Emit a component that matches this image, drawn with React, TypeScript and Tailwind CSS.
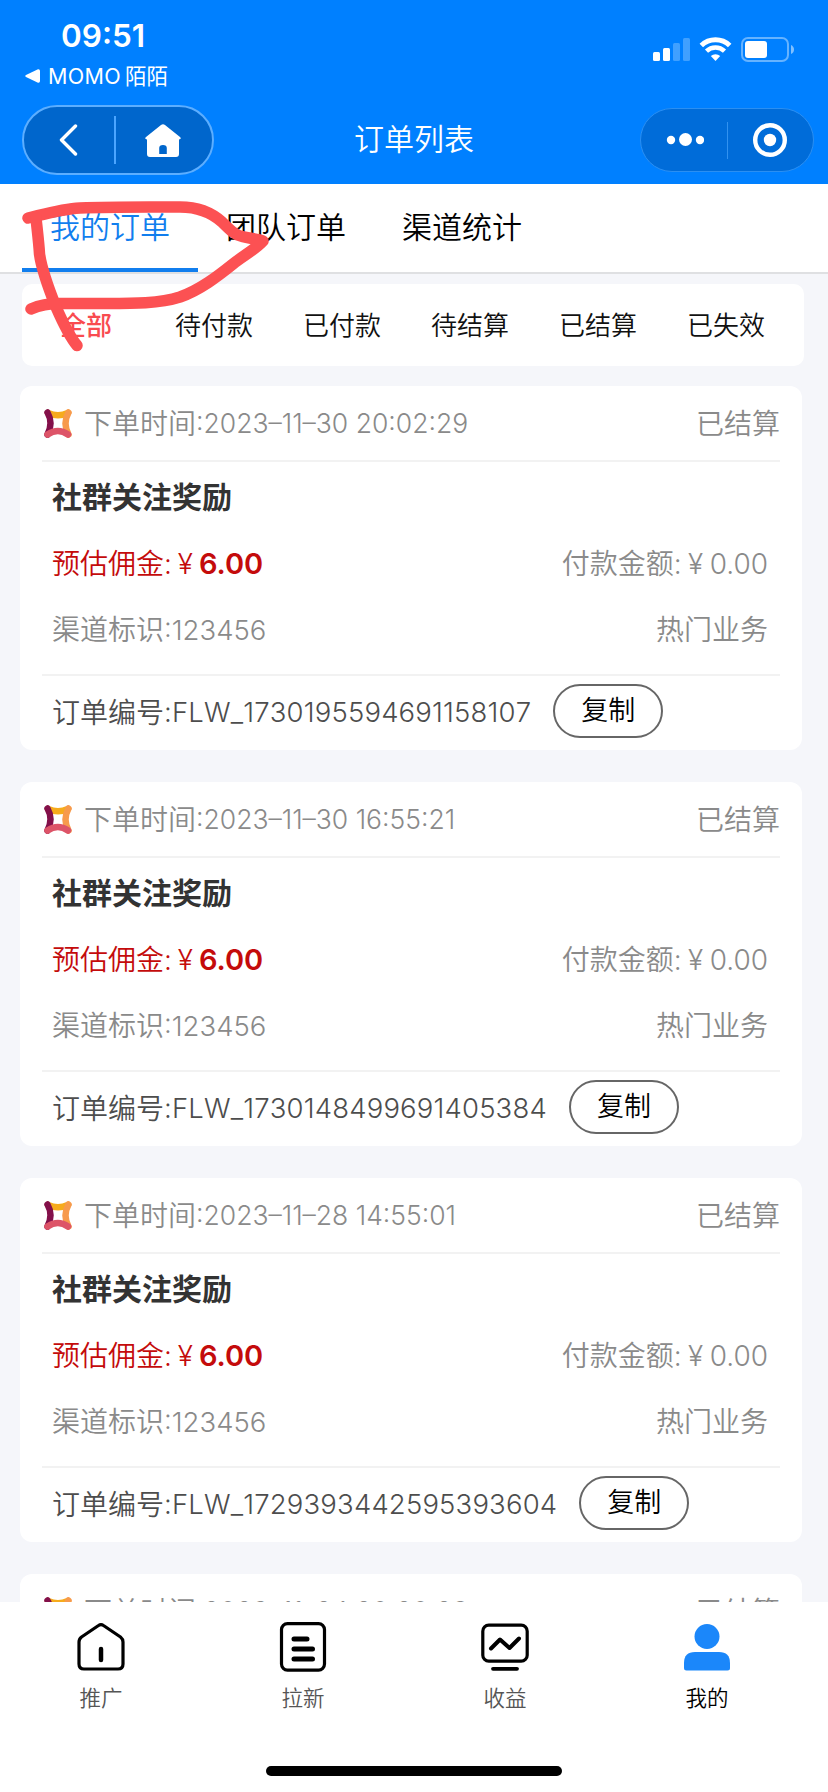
import React from 'react';

interface Order {
    id: string;
    time: string;
    status: string;
}

const tabs = ['我的订单', '团队订单', '渠道统计'];
const filters = ['全部', '待付款', '已付款', '待结算', '已结算', '已失效'];

const orders: Order[] = [
    { id: 'FLW_1730195594691158107', time: '2023–11–30 20:02:29', status: '已结算' },
    { id: 'FLW_1730148499691405384', time: '2023–11–30 16:55:21', status: '已结算' },
    { id: 'FLW_1729393442595393604', time: '2023–11–28 14:55:01', status: '已结算' },
    { id: 'FLW_1727940293640282302', time: '2023–11–24 20:20:28', status: '已结算' },
];

const StatusBar: React.FC = () => (
    <div className="flex h-[93px] justify-between pl-[25px] pr-[33px] text-white">
        <div>
            <div className="mt-[16px] pl-[36px] text-[31.5px] leading-[40px] font-semibold">09:51</div>
            <div className="mt-[5px] flex items-center gap-[8px] text-[21.5px] leading-[30px]">
                <svg width="15" height="14" viewBox="0 0 15 14" fill="currentColor">
                    <path d="M1 6 13 .3Q15 0 15 2v10q0 2-2 1.700L1 8Q-.5 7 1 6Z" />
                </svg>
                <span className="flex">
                    <span className="tracking-[0.3px]">MOMO</span>
                    <span className="ml-[4px]">陌陌</span>
                </span>
            </div>
        </div>
        <div className="mt-[37px] flex h-[25px]">
            <svg width="37" height="25" viewBox="0 0 37 25" fill="currentColor">
                <rect y="15" width="7" height="9" rx="1.500" />
                <rect x="10" y="11" width="7" height="13" rx="1.500" />
                <rect x="20" y="6" width="7" height="18" rx="1.500" opacity=".25" />
                <rect x="30" y="1" width="7" height="23" rx="1.500" opacity=".25" />
            </svg>
            <svg className="ml-[9px]" width="33" height="25" viewBox="0 0 33 25" fill="none" stroke="currentColor">
                <path d="M2.300 8.500a20.500 20.500 0 0 1 28.400 0" strokeWidth="5" />
                <path d="M7.500 14.200a13 13 0 0 1 18 0" strokeWidth="4.500" />
                <path d="M11.800 19a7 7 0 0 1 9.400 0L16.500 24Z" fill="currentColor" stroke="none" />
            </svg>
            <svg className="ml-[9px]" width="54" height="25" viewBox="0 0 54 25">
                <rect x="1" y="1" width="46" height="23" rx="6" fill="none" stroke="#fff" strokeWidth="2" opacity=".4" />
                <rect x="4" y="4" width="22" height="17" rx="3" fill="#fff" />
                <path d="M50 8q3 1.500 3 4.500T50 17Z" fill="#fff" opacity=".5" />
            </svg>
        </div>
    </div>
);

const NavBar: React.FC = () => (
    <div className="flex h-[91px] items-start pl-[22px] pr-[14px] text-white">
        <div className="mt-[12px] flex h-[70px] w-[192px] items-center rounded-full border-2 border-[#5caeff] bg-[#0066cc]">
            <svg className="ml-[35px]" width="20" height="32" viewBox="0 0 20 32" fill="none" stroke="currentColor" strokeWidth="3.400" strokeLinecap="round" strokeLinejoin="round">
                <path d="M16.500 2 2.500 16l14 14" />
            </svg>
            <div className="ml-[35px] h-[48px] w-[2px] bg-[#4ba5ff]" />
            <svg className="ml-[29px]" width="36" height="33" viewBox="0 0 36 33" fill="currentColor">
                <path d="M16 1q2-1.500 4 0l15 12q2 2-1 2.500V30q0 3-3 3H5q-3 0-3-3V15.500Q-1 15 1 13ZM14.200 30h7.600v-6q0-3-3.800-3t-3.800 3Z" fillRule="evenodd" />
            </svg>
        </div>
        <h1 className="mt-[25px] ml-[140px] text-[30px] leading-[42px] font-[350]">订单列表</h1>
        <div className="mt-[15px] ml-auto flex h-[64px] w-[174px] items-center rounded-full border border-[#2b8ff2] bg-[#006cd9]">
            <svg className="ml-[25px]" width="38" height="14" viewBox="0 0 38 14" fill="currentColor">
                <circle cx="5" cy="7" r="4.200" />
                <circle cx="19.500" cy="6.500" r="6.500" />
                <circle cx="34" cy="7" r="4.200" />
            </svg>
            <div className="ml-[23px] h-[37px] w-px bg-[#3292f0]" />
            <svg className="ml-[24px]" width="36" height="36" viewBox="0 0 36 36">
                <circle cx="18" cy="18" r="14.800" fill="none" stroke="#fff" strokeWidth="4.400" />
                <circle cx="18" cy="18" r="6.200" fill="#fff" />
            </svg>
        </div>
    </div>
);

const BrandIcon: React.FC = () => (
    <svg width="28" height="29" viewBox="0 0 28 29" fill="none" strokeLinecap="round" strokeWidth="6.500">
        <path d="M4 4Q14 8.500 24 4" stroke="#f6ab1c" />
        <path d="M24.500 3.500Q18.500 14.500 24.500 25.500" stroke="#f79a4c" />
        <path d="M3.500 3.500Q9.500 14 3.500 25.500" stroke="#83104a" />
        <path d="M3.500 25.500Q14 18.500 24 25.500" stroke="#dd5468" />
    </svg>
);

const OrderCard: React.FC<{ order: Order }> = ({ order }) => (
    <section className="mb-[32px] h-[364px] shrink-0 rounded-[12px] bg-white px-[22px] font-[350] text-[#8a8a8a]">
        <div className="flex h-[76px] items-center border-b-2 border-[#f2f2f2] pl-[2px] pt-[1px] text-[28px]">
            <BrandIcon />
            <span className="ml-[12px]">下单时间</span>
            <span className="text-[26.5px]">:{order.time}</span>
            <span className="ml-auto">{order.status}</span>
        </div>
        <div className="h-[214px] border-b-2 border-[#f2f2f2] pl-[10px] pr-[12px] pt-[3px] text-[28px]">
            <h2 className="h-[65px] text-[30px] leading-[65px] font-bold text-[#333]">社群关注奖励</h2>
            <div className="flex h-[67px] items-center justify-between">
                <p className="flex items-center text-[#c40b0b]">
                    预估佣金:<span className="w-[27px] text-center">¥</span>
                    <span className="text-[29px] font-semibold">6.00</span>
                </p>
                <p className="flex">
                    付款金额:<span className="w-[28px] text-center">¥</span>0.00
                </p>
            </div>
            <div className="flex h-[66px] items-center justify-between">
                <p>
                    渠道标识<span className="text-[27.5px]">:123456</span>
                </p>
                <p>热门业务</p>
            </div>
        </div>
        <div className="flex h-[74px] items-center pl-[10px] text-[28px] text-[#4d4d4d]">
            <span>订单编号</span>
            <span className="text-[27.5px] tracking-[0.17px] [font-kerning:none]">:{order.id}</span>
            <button className="ml-[22px] mt-[-4px] h-[54px] w-[110px] rounded-full border-2 border-[#666] text-[27px] font-[350] text-black">复制</button>
        </div>
    </section>
);

const HomeIcon = () => (
    <svg width="48" height="50" viewBox="0 0 48 50" fill="none" stroke="#000" strokeWidth="3.200" strokeLinecap="round" strokeLinejoin="round">
        <path d="M2 20q0-3 2.500-5L21.500 3.500q2.500-1.800 5 0L43.500 15q2.500 2 2.500 5v22q0 5-5 5H7q-5 0-5-5Z" />
        <path d="M24 27v11" strokeWidth="4.500" />
    </svg>
);

const ListIcon = () => (
    <svg width="48" height="50" viewBox="0 0 48 50" fill="none" stroke="#000" strokeLinecap="round">
        <rect x="2.500" y="1.600" width="43" height="46.500" rx="6" strokeWidth="3.200" />
        <path d="M15 17h13M15 27h18.500M15 37h18.500" strokeWidth="5" />
    </svg>
);

const ChartIcon = () => (
    <svg width="48" height="50" viewBox="0 0 48 50" fill="none" stroke="#000" strokeLinecap="round" strokeLinejoin="round">
        <rect x="1.800" y="3.200" width="44.400" height="36" rx="6" strokeWidth="3.200" />
        <path d="m10 26.500 9-9 9.500 8.500 9.500-9.500" strokeWidth="4" />
        <path d="M12 46.800h24" strokeWidth="3.800" />
    </svg>
);

const UserIcon = () => (
    <svg width="48" height="50" viewBox="0 0 48 50" fill="#1b87fa">
        <circle cx="24" cy="14.500" r="12.500" />
        <path d="M1 41q0-11 11-11h24q11 0 11 11v5q0 2.500-2.500 2.500h-41Q1 48.500 1 46Z" />
    </svg>
);

const navItems = [
    { label: '推广', Icon: HomeIcon },
    { label: '拉新', Icon: ListIcon },
    { label: '收益', Icon: ChartIcon },
    { label: '我的', Icon: UserIcon, active: true },
];

const BottomNav: React.FC = () => (
    <nav className="flex h-[190px] flex-col bg-white pt-[20px]">
        <div className="grid w-[808px] grid-cols-4">
            {navItems.map(({ label, Icon, active }) => (
                <div key={label} className="flex flex-col items-center">
                    <Icon />
                    <span className={`mt-[10px] text-[21.5px] leading-[32px] font-[350] ${active ? 'text-black' : 'text-[#555]'}`}>{label}</span>
                </div>
            ))}
        </div>
        <div className="mx-auto mt-auto mb-[16px] h-[10px] w-[296px] rounded-full bg-black" />
    </nav>
);

export default function App() {
    return (
        <div className="relative flex h-[1792px] w-[828px] flex-col overflow-hidden bg-[#f5f6fa] font-[Inter,'Noto_Sans_CJK_SC',sans-serif]">
            <header className="h-[184px] shrink-0 bg-[#0080ff]">
                <StatusBar />
                <NavBar />
            </header>

            <div className="flex h-[90px] shrink-0 border-b-2 border-[#dfe0e2] bg-white pl-[22px] text-[30px] font-[350]">
                {tabs.map((tab, i) => (
                    <div
                        key={tab}
                        className={`h-[88px] w-[176px] border-b-4 text-center leading-[86px] ${i === 0 ? 'border-[#117eee] text-[#117eee]' : 'border-transparent text-black'}`}
                    >
                        {tab}
                    </div>
                ))}
            </div>

            <div className="mt-[10px] ml-[22px] flex h-[82px] w-[782px] shrink-0 items-center rounded-[10px] bg-white text-[26px]">
                {filters.map((item, i) => (
                    <div key={item} className={`w-[128px] text-center ${i === 0 ? 'font-medium text-[#f94b50]' : 'font-[350] text-[#111]'}`}>
                        {item}
                    </div>
                ))}
            </div>

            <main className="mt-[20px] flex flex-1 flex-col overflow-hidden pl-[20px] pr-[26px]">
                {orders.map((order) => (
                    <OrderCard key={order.id} order={order} />
                ))}
            </main>

            <BottomNav />

            {/* Hand-drawn marker around the active tab */}
            <svg className="pointer-events-none absolute top-[180px] left-0" width="280" height="190" viewBox="0 0 280 190" fill="none" stroke="#fc5153" strokeWidth="11.500" strokeLinecap="round" strokeLinejoin="round">
                <path d="M28 38C45 34 62 29 80 28C115 26.500 150 27 180 27C198 27 212 33 222 42C230 50 235 55 242 56.500C250 58.500 258 59 263 61C256 69 243 76 233 84C218 96 200 110 180 117C158 124 130 123.500 100 123.500H60C48 123.500 40 125 31 129" />
                <path d="M36 38C37 48 39 64 39.500 74C42 92 50 112 56 127C63 143 69 156 77 165.500" />
            </svg>
        </div>
    );
}
